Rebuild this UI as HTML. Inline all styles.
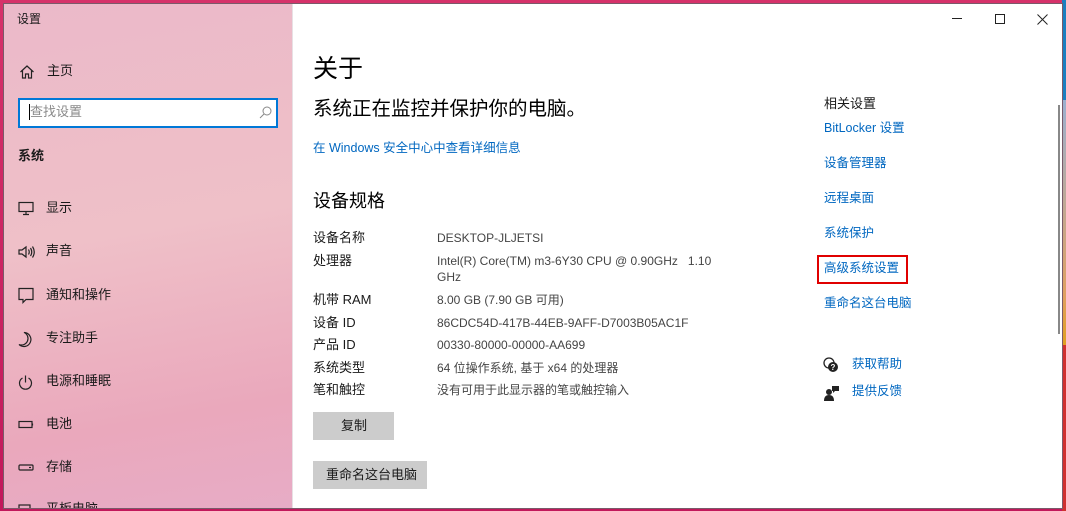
<!DOCTYPE html>
<html><head><meta charset="utf-8"><style>
*{margin:0;padding:0;box-sizing:border-box}
body{width:1066px;height:511px;overflow:hidden;position:relative;font-family:"Liberation Sans","Noto Sans CJK SC",sans-serif;background:linear-gradient(180deg,#d6326a 0%,#c2185b 100%)}
.t{position:absolute;white-space:nowrap;line-height:1}
#win{position:absolute;left:4px;top:4px;width:1058px;height:504px;background:#fff;overflow:hidden;box-shadow:0 0 0 1px #7a5a6a}
#side{position:absolute;left:0;top:0;width:288px;height:504px;background:linear-gradient(170deg,#ebb9c9 0%,#efc0c8 45%,#eaa8bc 80%,#e7acc6 100%)}
.s{font-size:13px;color:#1a1a1a}
.v{font-size:12px;color:#444}
.lk{color:#0067c0;font-size:12.5px}
.ic{position:absolute}
</style></head><body>
<div style="position:absolute;right:0;top:0;width:4px;height:100px;background:#1b7fc0"></div>
<div style="position:absolute;right:0;top:100px;width:4px;height:245px;background:linear-gradient(#9bb0d0,#e0a060 80%,#e0a020)"></div>
<div style="position:absolute;right:0;top:345px;width:4px;height:166px;background:#d03030"></div>
<div id="win">
<div id="side">
<div class="t s" style="left:13px;top:9px;font-size:12px">设置</div>
<svg class="ic" style="left:15px;top:60px" width="16" height="16" viewBox="0 0 16 16" fill="none" stroke="#222" stroke-width="1.2"><path d="M1.5 8 8 2l6.5 6M3.5 6.5V14h3v-4h3v4h3V6.5"/></svg>
<div class="t s" style="left:43px;top:60px;font-size:13px">主页</div>
<div style="position:absolute;left:14px;top:94px;width:260px;height:30px;border:2px solid #0078d7;background:#fff"></div>
<div style="position:absolute;left:25px;top:100px;width:1px;height:16px;background:#000"></div>
<div class="t" style="left:26px;top:101px;font-size:13px;color:#8a8a8a">查找设置</div>
<svg class="ic" style="left:255px;top:102px" width="13" height="13" viewBox="0 0 13 13" fill="none" stroke="#888" stroke-width="1"><circle cx="8" cy="5" r="4"/><path d="M5 8 1 12"/></svg>
<div class="t s" style="left:14px;top:145px;font-weight:bold">系统</div>
<svg class="ic" style="left:14px;top:197px" width="18" height="16" viewBox="0 0 18 16" fill="none" stroke="#222" stroke-width="1.2"><rect x="1" y="1.5" width="14" height="9"/><path d="M8 10.5v3M5 13.5h6"/></svg>
<div class="t s" style="left:42px;top:197px">显示</div>
<svg class="ic" style="left:14px;top:240px" width="18" height="16" viewBox="0 0 18 16" fill="none" stroke="#222" stroke-width="1.2"><path d="M1 6h3l4-3v10l-4-3H1zM10.5 5.5q1.5 2.5 0 5M12.5 4q2.5 4 0 8M14.5 2.5q3.5 5.5 0 11"/></svg>
<div class="t s" style="left:42px;top:240px">声音</div>
<svg class="ic" style="left:14px;top:283px" width="18" height="18" viewBox="0 0 18 18" fill="none" stroke="#222" stroke-width="1.2"><path d="M1 1.5h14v11H8l-3 3v-3H1z"/></svg>
<div class="t s" style="left:42px;top:284px">通知和操作</div>
<svg class="ic" style="left:14px;top:327px" width="16" height="18" viewBox="0 0 16 18" fill="none" stroke="#222" stroke-width="1.2"><path d="M6 1.5a7 7 0 1 1-5 12 6 6 0 0 0 5-12z"/></svg>
<div class="t s" style="left:42px;top:327px">专注助手</div>
<svg class="ic" style="left:14px;top:370px" width="16" height="18" viewBox="0 0 16 18" fill="none" stroke="#222" stroke-width="1.2"><path d="M4.5 4a6 6 0 1 0 6 0M7.5 1.5v7"/></svg>
<div class="t s" style="left:42px;top:370px">电源和睡眠</div>
<svg class="ic" style="left:14px;top:416px" width="18" height="10" viewBox="0 0 18 10" fill="none" stroke="#222" stroke-width="1.2"><rect x="1" y="1.5" width="13" height="6"/><path d="M14.5 3.5v2"/></svg>
<div class="t s" style="left:42px;top:413px">电池</div>
<svg class="ic" style="left:14px;top:459px" width="18" height="10" viewBox="0 0 18 10" fill="none" stroke="#222" stroke-width="1.2"><rect x="1" y="2" width="14" height="5" rx="1"/><path d="M11 4.5h2"/></svg>
<div class="t s" style="left:42px;top:456px">存储</div>
<svg class="ic" style="left:14px;top:500px" width="14" height="10" viewBox="0 0 14 10" fill="none" stroke="#222" stroke-width="1.2"><rect x="1" y="1" width="11" height="10"/></svg>
<div class="t s" style="left:42px;top:498px">平板电脑</div>
</div>
<div style="position:absolute;left:288px;top:0;width:1px;height:504px;background:#e8e0e4"></div>
<div style="position:absolute;left:948px;top:14px;width:10px;height:1px;background:#222"></div>
<div style="position:absolute;left:991px;top:10px;width:10px;height:10px;border:1px solid #222"></div>
<svg class="ic" style="left:1033px;top:10px" width="11" height="11" viewBox="0 0 11 11" stroke="#222" stroke-width="1"><path d="M.5.5l10 10M10.5.5l-10 10"/></svg>
<div class="t" style="left:309px;top:53px;font-size:25px;color:#000">关于</div>
<div class="t" style="left:309px;top:96px;font-size:19.5px;color:#000">系统正在监控并保护你的电脑。</div>
<div class="t lk" style="left:309px;top:138px">在 Windows 安全中心中查看详细信息</div>
<div class="t" style="left:309px;top:188px;font-size:18px;color:#000">设备规格</div>
<div class="t s" style="left:309px;top:227px">设备名称</div><div class="t v" style="left:433px;top:228px">DESKTOP-JLJETSI</div>
<div class="t s" style="left:309px;top:250px">处理器</div><div class="t v" style="left:433px;top:251px">Intel(R) Core(TM) m3-6Y30 CPU @ 0.90GHz&nbsp;&nbsp;&nbsp;1.10</div>
<div class="t v" style="left:433px;top:267px">GHz</div>
<div class="t s" style="left:309px;top:289px">机带 RAM</div><div class="t v" style="left:433px;top:290px">8.00 GB (7.90 GB 可用)</div>
<div class="t s" style="left:309px;top:312px">设备 ID</div><div class="t v" style="left:433px;top:313px">86CDC54D-417B-44EB-9AFF-D7003B05AC1F</div>
<div class="t s" style="left:309px;top:334px">产品 ID</div><div class="t v" style="left:433px;top:335px">00330-80000-00000-AA699</div>
<div class="t s" style="left:309px;top:357px">系统类型</div><div class="t v" style="left:433px;top:358px">64 位操作系统, 基于 x64 的处理器</div>
<div class="t s" style="left:309px;top:379px">笔和触控</div><div class="t v" style="left:433px;top:380px">没有可用于此显示器的笔或触控输入</div>
<div style="position:absolute;left:309px;top:408px;width:81px;height:28px;background:#ccc"></div>
<div class="t s" style="left:337px;top:415px">复制</div>
<div style="position:absolute;left:309px;top:457px;width:114px;height:28px;background:#ccc"></div>
<div class="t s" style="left:322px;top:464px">重命名这台电脑</div>
<div class="t s" style="left:820px;top:93px">相关设置</div>
<div class="t lk" style="left:820px;top:118px">BitLocker 设置</div>
<div class="t lk" style="left:820px;top:153px">设备管理器</div>
<div class="t lk" style="left:820px;top:188px">远程桌面</div>
<div class="t lk" style="left:820px;top:223px">系统保护</div>
<div style="position:absolute;left:813px;top:251px;width:91px;height:29px;border:2px solid #e00000"></div>
<div class="t lk" style="left:820px;top:258px">高级系统设置</div>
<div class="t lk" style="left:820px;top:293px">重命名这台电脑</div>
<svg class="ic" style="left:819px;top:353px" width="16" height="16" viewBox="0 0 16 16"><circle cx="6" cy="6" r="5" fill="none" stroke="#222" stroke-width="1.3"/><circle cx="10" cy="10" r="5" fill="#222"/><text x="10" y="13" font-size="8" fill="#fff" text-anchor="middle" font-family="Liberation Sans" font-weight="bold">?</text></svg>
<div class="t lk" style="left:848px;top:354px">获取帮助</div>
<svg class="ic" style="left:820px;top:381px" width="16" height="16" viewBox="0 0 16 16" fill="#222"><circle cx="5" cy="7" r="3"/><path d="M0 16q0-6 5-6t5 6z"/><path d="M8 1h7v5h-4l-2 2V6H8z"/></svg>
<div class="t lk" style="left:848px;top:381px">提供反馈</div>
<div style="position:absolute;left:1054px;top:101px;width:2px;height:229px;background:#888"></div>
</div>
</body></html>
